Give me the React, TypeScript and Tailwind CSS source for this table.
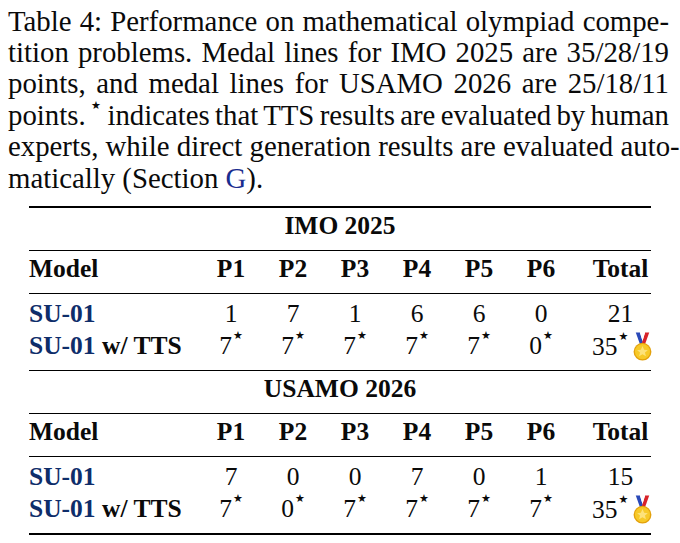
import React from 'react'

const serif = '[font-family:Liberation_Serif,Times_New_Roman,serif]'

const captionLines = [
  'Table 4: Performance on mathematical olympiad compe-',
  'tition problems. Medal lines for IMO 2025 are 35/28/19',
  'points, and medal lines for USAMO 2026 are 25/18/11',
]

type Section = {
  title: string
  base: number[]
  baseTotal: string
  tts: number[]
}

const sections: Section[] = [
  { title: 'IMO 2025', base: [1, 7, 1, 6, 6, 0], baseTotal: '21', tts: [7, 7, 7, 7, 7, 0] },
  { title: 'USAMO 2026', base: [7, 0, 0, 7, 0, 1], baseTotal: '15', tts: [7, 0, 7, 7, 7, 7] },
]

const cols = 'grid grid-cols-[171px_62px_62px_62px_62px_62px_62px_1fr]'

function Star() {
  return <sup className="ml-[1px] align-[0.85em] [font-family:DejaVu_Sans,sans-serif] text-[11px] leading-none">★</sup>
}

function Medal() {
  return (
    <svg width="21" height="29" viewBox="0 0 20 28" className="ml-[4px] inline-block align-[-6px]">
      {/* ribbon */}
      <path d="M3.5 0.5 L7.5 0.5 L11 12 L8 13 Z" fill="#2a49b8" />
      <path d="M16.5 0.5 L12.5 0.5 L9 12 L12 13 Z" fill="#d8232a" />
      <path d="M7.5 0.5 L12.5 0.5 L10 8.5 Z" fill="#ffffff" />
      {/* disc */}
      <circle cx="10" cy="19" r="8.6" fill="#e3a10c" />
      <circle cx="10" cy="19" r="7.3" fill="#f7c928" />
      <path
        d="M10 13.6 L11.6 17.1 L15.2 17.5 L12.4 19.9 L13.3 23.5 L10 21.5 L6.7 23.5 L7.6 19.9 L4.8 17.5 L8.4 17.1 Z"
        fill="#fde27a"
      />
    </svg>
  )
}

function Rule({ thick }: { thick?: boolean }) {
  return <div className={thick ? 'h-[2px] bg-black' : 'h-px bg-black'} />
}

function SectionBlock({ s }: { s: Section }) {
  return (
    <>
      <div className="pt-[4px] pb-[10px] text-center font-bold leading-[28px]">{s.title}</div>
      <Rule />
      <div className={`${cols} pt-[4px] pb-[10px] font-bold leading-[28px]`}>
        <div>Model</div>
        {['P1', 'P2', 'P3', 'P4', 'P5', 'P6'].map((p) => (
          <div key={p} className="text-center">{p}</div>
        ))}
        <div className="pl-[18px] text-center">Total</div>
      </div>
      <Rule />
      <div className="pt-[6px] pb-[9px]">
        <div className={`${cols} leading-[28px]`}>
          <div className="font-bold text-[#0e2d6a]">SU-01</div>
          {s.base.map((v, i) => (
            <div key={i} className="text-center">{v}</div>
          ))}
          <div className="pl-[18px] text-center">{s.baseTotal}</div>
        </div>
        <div className={`${cols} mt-[4px] leading-[28px]`}>
          <div className="whitespace-nowrap font-bold">
            <span className="text-[#0e2d6a]">SU-01</span> w/ TTS
          </div>
          {s.tts.map((v, i) => (
            <div key={i} className="text-center">
              {v}
              <Star />
            </div>
          ))}
          <div className="whitespace-nowrap pl-[20px]">
            35
            <Star />
            <Medal />
          </div>
        </div>
      </div>
    </>
  )
}

export default function App() {
  return (
    <div className={`${serif} h-[543px] w-[680px] overflow-hidden bg-white text-[#0a0a0a]`}>
      <div className="pt-[5.5px] pl-[8px] pr-[11px] text-[28.8px] leading-[31.4px]">
        {captionLines.map((l) => (
          <div key={l} className="whitespace-nowrap text-justify [text-align-last:justify]">{l}</div>
        ))}
        <div className="whitespace-nowrap text-justify [text-align-last:justify] [word-spacing:-3px]">
          points. <sup className="[font-family:DejaVu_Sans,sans-serif] text-[11px] align-[0.9em]">★</sup> indicates that TTS results are evaluated by human
        </div>
        <div className="whitespace-nowrap text-justify [text-align-last:justify]">
          experts, while direct generation results are evaluated auto-
        </div>
        <div className="whitespace-nowrap">
          matically (Section <span className="text-[#1a2d8f]">G</span>).
        </div>
      </div>

      <div className="mx-[29px] mt-[12px] w-[622px] text-[25.5px]">
        <Rule thick />
        <SectionBlock s={sections[0]} />
        <Rule />
        <SectionBlock s={sections[1]} />
        <Rule thick />
      </div>
    </div>
  )
}
